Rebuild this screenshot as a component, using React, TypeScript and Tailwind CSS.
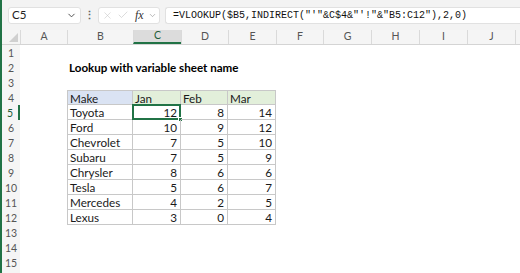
import { ChevronDown, X, Check } from 'lucide-react';

/* ================= DATA ================= */
const COLS = ['A', 'B', 'C', 'D', 'E', 'F', 'G', 'H', 'I', 'J', ''];
const WIDTHS = [47, 66, 48, 47, 48, 47, 48, 48, 48, 48, 40];

const rows: [string, number, number, number][] = [
  ['Toyota', 12, 8, 14],
  ['Ford', 10, 9, 12],
  ['Chevrolet', 7, 5, 10],
  ['Subaru', 7, 5, 9],
  ['Chrysler', 8, 6, 6],
  ['Tesla', 5, 6, 7],
  ['Mercedes', 4, 2, 5],
  ['Lexus', 3, 0, 4],
];

const FORMULA = '=VLOOKUP($B5,INDIRECT("\'"&C$4&"\'!"&"B5:C12"),2,0)';

const font = { fontFamily: 'Lato, "Open Sans", sans-serif' };

/* ================= CELLS ================= */
function cellContent(r: number, c: number) {
  // r: 1-based row, c: 0-based column index (0 = A)
  if (r === 2 && c === 1)
    return (
      <span className="absolute left-[2px] top-0 whitespace-nowrap font-bold text-[11.6px] leading-[15px] text-black">
        Lookup with variable sheet name
      </span>
    );
  if (r === 4 && c >= 1 && c <= 4) {
    const label = ['Make', 'Jan', 'Feb', 'Mar'][c - 1];
    return <span className="pl-[2px]">{label}</span>;
  }
  if (r >= 5 && r <= 12 && c >= 1 && c <= 4) {
    const row = rows[r - 5];
    if (c === 1) return <span className="pl-[2px]">{row[0]}</span>;
    return <span className="block text-right pr-[3px]">{row[c - 1]}</span>;
  }
  return null;
}

function cellClass(r: number, c: number) {
  const inTable = r >= 4 && r <= 12 && c >= 1 && c <= 4;
  if (!inTable) return '';
  let cls = 'border-r border-b border-[#c8c8c8]';
  if (c === 1) cls += ' border-l';
  if (r === 4) cls += ' border-t';
  if (r === 4 && c === 1) cls += ' bg-[#dae3f3]';
  if (r === 4 && c > 1) cls += ' bg-[#e2efda]';
  return cls;
}

/* ================= COMPONENT ================= */
export default function App() {
  return (
    <div
      className="w-[520px] h-[273px] overflow-hidden bg-white border-l-2 border-[#217346] text-[11.7px] text-[#1a1a1a]"
      style={font}
    >
      {/* ================= FORMULA BAR ================= */}
      <div className="h-[30px] bg-[#f3f3f3] flex items-center gap-0 pl-[6px]">
        <div className="w-[73px] h-[17px] bg-white rounded-[3px] border border-[#e1e1e1] flex items-center justify-between pl-[3px] pr-[3px] text-[11.5px] text-[#222]">
          <span>C5</span>
          <ChevronDown size={11} strokeWidth={2} className="text-[#444]" />
        </div>
        <div className="w-[17px] flex justify-center text-[#666] text-[11px] font-bold">⋮</div>
        <div className="w-[62px] h-[17px] bg-white rounded-[3px] border border-[#e1e1e1] flex items-center pl-[3px] gap-[4px]">
          <X size={11} strokeWidth={1.2} className="text-[#c4c4c4]" />
          <Check size={12} strokeWidth={1.2} className="text-[#c4c4c4]" />
          <span className="italic text-[12px] text-[#333] ml-[2px]" style={{ fontFamily: '"Liberation Serif", serif' }}>
            fx
          </span>
          <ChevronDown size={9} strokeWidth={1.5} className="text-[#888]" />
        </div>
        <div className="ml-[5px] flex-1 h-[17px] bg-white rounded-l-[3px] border border-r-0 border-[#e1e1e1] flex items-center pl-[7px]">
          <span
            className="whitespace-nowrap text-[10px] text-[#111]"
            style={{ fontFamily: '"Liberation Mono", monospace' }}
          >
            {FORMULA}
          </span>
        </div>
      </div>

      {/* ================= GRID ================= */}
      <div className="flex flex-col">
        {/* column headers */}
        <div className="flex h-[15px] bg-[#f5f5f5] border-b border-[#d4d4d4] text-[10.5px] text-[#555]">
          <div className="w-[18px] shrink-0 relative">
            <div className="absolute right-[2px] bottom-[2px] w-0 h-0 border-l-[9px] border-l-transparent border-b-[9px] border-b-[#d0d0d0]" />
          </div>
          {COLS.map((col, i) => (
            <div
              key={i}
              style={{ width: WIDTHS[i] }}
              className={`shrink-0 flex items-center justify-center border-l border-[#dadada] ${
                col === 'C' ? 'bg-[#dcdcdc] border-b-2 border-b-[#217346] text-[#1e5c38]' : ''
              }`}
            >
              {col}
            </div>
          ))}
        </div>

        {/* rows */}
        {Array.from({ length: 15 }, (_, k) => k + 1).map(r => (
          <div key={r} className="flex h-[15px] leading-[14px]">
            <div
              className={`w-[18px] shrink-0 bg-[#f5f5f5] flex items-center justify-center text-[10.5px] ${
                r === 5 ? 'border-r-2 border-[#217346] text-[#1e5c38] bg-[#e4e4e4]' : 'text-[#555]'
              }`}
            >
              {r}
            </div>
            {COLS.map((_, c) => (
              <div
                key={c}
                style={{ width: WIDTHS[c] }}
                className={`shrink-0 relative overflow-visible ${cellClass(r, c)}`}
              >
                {cellContent(r, c)}
                {r === 5 && c === 2 && (
                  <>
                    <div className="absolute -left-[1px] -top-[1px] -right-[1px] -bottom-[1px] border-2 border-[#217346]" />
                    <div className="absolute -right-[3px] -bottom-[3px] w-[5px] h-[5px] bg-[#217346] border border-white" />
                  </>
                )}
              </div>
            ))}
          </div>
        ))}
        <div className="flex h-[15px]">
          <div className="w-[18px] shrink-0 bg-[#f5f5f5]" />
        </div>
      </div>
    </div>
  );
}
